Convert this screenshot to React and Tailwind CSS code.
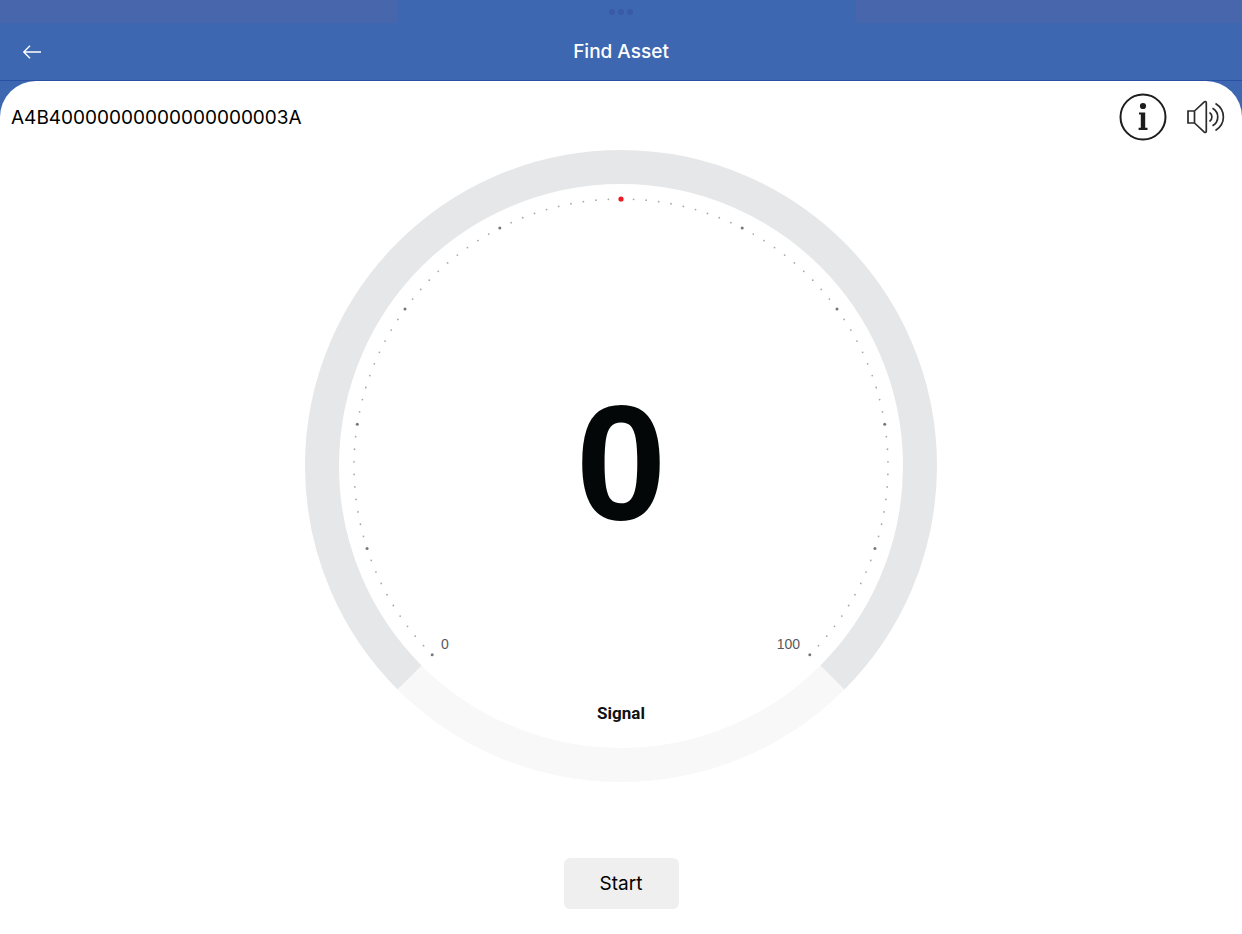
import React, { useState } from "react";

const TICKS = 100;
const CENTER = 317;

// Angle is clockwise from the top of the dial
const polar = (angle, radius) => {
  const rad = (angle * Math.PI) / 180;
  return [CENTER + radius * Math.sin(rad), CENTER - radius * Math.cos(rad)];
};

const arc = (from, to, radius) => {
  const [x1, y1] = polar(from, radius);
  const [x2, y2] = polar(to, radius);
  const large = to - from > 180 ? 1 : 0;
  return `M${x1} ${y1}A${radius} ${radius} 0 ${large} 1 ${x2} ${y2}`;
};

function SignalGauge({ value }) {
  return (
    <svg viewBox="0 0 634 634" className="w-full max-w-[634px]" role="img" aria-label={`Signal ${value}`}>
      <path d={arc(135, 225, 299)} fill="none" stroke="#f8f8f8" strokeWidth="34" />
      <path d={arc(-135, 135, 299)} fill="none" stroke="#e6e7e9" strokeWidth="34" />
      {value > 0 && (
        <path d={arc(-135, -135 + value * 2.7, 299)} fill="none" stroke="#3d67b1" strokeWidth="34" />
      )}
      {Array.from({ length: TICKS + 1 }, (_, i) => {
        const [x, y] = polar(-135 + i * 2.7, 267);
        if (i === TICKS / 2) return <circle key={i} cx={x} cy={y} r="2.6" fill="#ed1c24" />;
        const major = i % 10 === 0;
        return <circle key={i} cx={x} cy={y} r={major ? 1.5 : 0.9} fill={major ? "#77787b" : "#a8a8a8"} />;
      })}
      <text x="317" y="370" textAnchor="middle" className="fill-[#030707] font-['Liberation_Sans',sans-serif] text-[163px] font-bold">{value}</text>
      <text x="137" y="500" className="fill-[#58595b] font-['Liberation_Sans',sans-serif] text-[14px]">0</text>
      <text x="496" y="500" textAnchor="end" className="fill-[#58595b] font-['Liberation_Sans',sans-serif] text-[14px]">100</text>
      <text x="317" y="570" textAnchor="middle" className="fill-[#111111] font-['Roboto',sans-serif] text-[17px] font-bold">Signal</text>
    </svg>
  );
}

function BackIcon() {
  return (
    <svg width="20" height="14" viewBox="0 0 20 14" fill="none" stroke="currentColor" strokeWidth="1.4">
      <path d="M1.8 7H19M8 0.8L1.8 7l6.200 6.200" />
    </svg>
  );
}

function InfoIcon() {
  return (
    <svg width="48" height="48" viewBox="0 0 48 48" fill="#1d1d1f">
      <circle cx="24" cy="24" r="22.5" fill="none" stroke="#1d1d1f" strokeWidth="2" />
      <circle cx="24" cy="13" r="3.1" />
      <path d="M20 19.500h6.200v15.300h2.300v2.200h-8.900v-2.200h2.200V21.500H20z" />
    </svg>
  );
}

function SpeakerIcon() {
  return (
    <svg width="38" height="34" viewBox="0 0 38 34" fill="none" stroke="#2b2b2b" strokeWidth="1.7">
      <path d="M1 11h6.500v12H1zM7.500 11L17.300 1.900c.8-.7 2-.4 2 .8v28.600c0 1.200-1.200 1.500-2 .8L7.500 23" />
      <path d="M22.500 12.500c3.200 2 3.200 7 0 9M25.500 8.200c7 4 7 13.600 0 17.600M28.500 3.500c10.500 6.500 10.500 20.500 0 27" />
    </svg>
  );
}

export default function App() {
  const [running, setRunning] = useState(false);
  const [muted, setMuted] = useState(false);

  return (
    <div className="flex min-h-screen flex-col bg-[#3d67b1] font-['Inter',sans-serif]">
      <header className="border-b border-[#2a50a4]">
        <div className="grid h-6 grid-cols-[397fr_459fr_386fr] pb-px">
          <div className="bg-[#4766ac]" />
          <div className="flex items-center justify-center gap-[3px] pr-3">
            <span className="size-1.5 rounded-full bg-[#3a5aa7]" />
            <span className="size-1.5 rounded-full bg-[#3a5aa7]" />
            <span className="size-1.5 rounded-full bg-[#3a5aa7]" />
          </div>
          <div className="bg-[#4766ac]" />
        </div>
        <div className="grid h-14 grid-cols-[1fr_auto_1fr] items-center px-[22px] text-white">
          <button type="button" aria-label="Back" className="justify-self-start">
            <BackIcon />
          </button>
          <h1 className="text-[19px] leading-6 font-medium">Find Asset</h1>
        </div>
      </header>

      <main className="flex grow flex-col items-center rounded-t-[36px] bg-white pb-6">
        <div className="flex h-[68px] w-full items-center justify-between pt-1 pr-[17px] pl-[11px]">
          <span className="pt-0.5 text-[19px] leading-6 text-black">A4B40000000000000000003A</span>
          <div className="flex items-center gap-5">
            <button type="button" aria-label="Asset info">
              <InfoIcon />
            </button>
            <button type="button" aria-label="Sound" aria-pressed={muted} onClick={() => setMuted(!muted)}>
              <SpeakerIcon />
            </button>
          </div>
        </div>

        <SignalGauge value={0} />

        <button
          type="button"
          onClick={() => setRunning(!running)}
          className="mt-[75px] h-[51px] w-[115px] rounded-md bg-[#efefef] text-[19px] leading-6 text-black"
        >
          {running ? "Stop" : "Start"}
        </button>
      </main>
    </div>
  );
}
